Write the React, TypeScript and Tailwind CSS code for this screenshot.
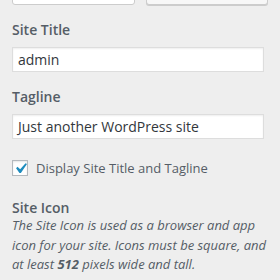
import React from "react";

export default function App() {
  return (
    <div
      className="w-[280px] h-[280px] overflow-hidden bg-[#eeeeee] px-3 text-[#555d66]"
      style={{ fontFamily: '"Open Sans", "Noto Sans", sans-serif' }}
    >
      <div className="flex gap-[11px] mt-[-25px] h-[30px]">
        <div className="w-[123px] h-[30px] rounded-[3px] border border-[#cccccc] bg-white" />
        <div className="w-[123px] h-[30px] rounded-[3px] border border-[#cccccc] bg-[#f7f7f7] shadow-[0_1px_0_#cccccc]" />
      </div>

      <div className="mt-[15px] text-[14px] leading-[20px] font-semibold text-[#555d66]">Site Title</div>
      <div className="mt-[7px] w-[252px] h-[25px] border border-[#dddddd] bg-white shadow-[inset_0_1px_2px_rgba(0,0,0,0.07)] px-[5px] flex items-center text-[14px] text-[#32373c]">
        admin
      </div>

      <div className="mt-[15px] text-[14px] leading-[20px] font-semibold text-[#555d66]">Tagline</div>
      <div className="mt-[7px] w-[252px] h-[25px] border border-[#dddddd] bg-white shadow-[inset_0_1px_2px_rgba(0,0,0,0.07)] px-[5px] flex items-center text-[14px] text-[#32373c]">
        Just another WordPress site
      </div>

      <div className="mt-[19px] flex items-center h-[20px] gap-[8px]">
        <div className="w-[16px] h-[16px] border border-[#b4b9be] bg-white shadow-[inset_0_1px_2px_rgba(0,0,0,0.1)] flex items-center justify-center overflow-visible">
          <svg width="21" height="21" viewBox="0 0 20 20" className="shrink-0 -m-[3px]">
            <path d="M14.83 4.89l1.34.94-5.81 8.38H9.02L5.78 9.67l1.34-1.25 2.57 2.4z" fill="#1e8cbe" />
          </svg>
        </div>
        <span className="text-[13px] leading-[20px] text-[#555d66]">Display Site Title and Tagline</span>
      </div>

      <div className="mt-[20px] text-[14px] leading-[20px] font-semibold text-[#555d66]">Site Icon</div>
      <p className="mt-[-2px] text-[13px] leading-[19.7px] italic text-[#555d66]">
        The Site Icon is used as a browser and app icon for your site. Icons must be square, and at least{" "}
        <strong className="font-bold">512</strong> pixels wide and tall.
      </p>
    </div>
  );
}
